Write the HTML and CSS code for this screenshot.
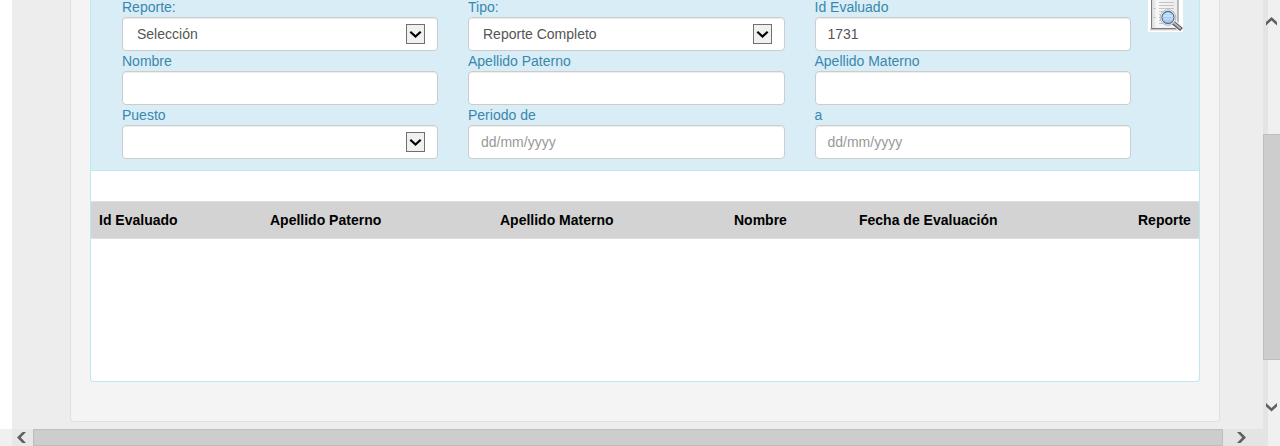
FILE: index.html
```html
<!DOCTYPE html>
<html lang="es">
<head>
<meta charset="utf-8">
<title>Reportes</title>
<link rel="stylesheet" href="styles.css">
</head>
<body>
<div class="window">
  <div class="main-row">
    <main class="page">
      <section class="well">
        <div class="panel">
          <div class="panel-heading">
            <form class="filters">
              <div class="field"><label>Reporte:</label><div class="control select"><span>Selección</span><i class="drop"><svg width="13" height="9" viewBox="0 0 13 9"><path d="M1.3 1.7 6.5 6.6 11.7 1.7"/></svg></i></div></div>
              <div class="field"><label>Tipo:</label><div class="control select"><span>Reporte Completo</span><i class="drop"><svg width="13" height="9" viewBox="0 0 13 9"><path d="M1.3 1.7 6.5 6.6 11.7 1.7"/></svg></i></div></div>
              <div class="field"><label>Id Evaluado</label><div class="control">1731</div></div>
              <div class="field"><label>Nombre</label><div class="control"></div></div>
              <div class="field"><label>Apellido Paterno</label><div class="control"></div></div>
              <div class="field"><label>Apellido Materno</label><div class="control"></div></div>
              <div class="field"><label>Puesto</label><div class="control select"><span></span><i class="drop"><svg width="13" height="9" viewBox="0 0 13 9"><path d="M1.3 1.7 6.5 6.6 11.7 1.7"/></svg></i></div></div>
              <div class="field"><label>Periodo de</label><div class="control hint">dd/mm/yyyy</div></div>
              <div class="field"><label>a</label><div class="control hint">dd/mm/yyyy</div></div>
            </form>
            <svg class="search-icon" width="35" height="32" viewBox="0 0 35 32">
              <defs>
                <linearGradient id="paper"><stop offset="0" stop-color="#d6d6d6"/><stop offset=".2" stop-color="#f7f7f7"/><stop offset="1" stop-color="#ececec"/></linearGradient>
                <linearGradient id="lens" x1="0" y1="0" x2="0" y2="1"><stop offset="0" stop-color="#e6f0fa"/><stop offset=".5" stop-color="#c3daf2"/><stop offset="1" stop-color="#a9cbee"/></linearGradient>
              </defs>
              <path fill="#fff" d="M0 0h35v32H0z"/>
              <path fill="#c4c4c4" d="M2 28.500h29v1.800H2z"/>
              <path fill="url(#paper)" stroke="#7c7c7c" d="M3.500-2h26.500v30.500H3.500z"/>
              <path fill="none" stroke="#bbb" d="M5.500 8.500h2M5.500 17.500h2"/>
              <path fill="none" stroke="#c4c4c4" d="M11 2.500h15M11 5.500h15M11 8.500h15M11 11.500h15M11 14.500h15M11 17.500h15M11 20.500h15M11 23.500h6"/>
              <path stroke="#fff" stroke-width="6" d="m25 22 8 7"/>
              <path stroke="#555" stroke-width="4.200" d="m25.500 22.800 8 6.700"/>
              <path stroke="#b5b5b5" stroke-width="2" d="m25.500 22.500 7.200 6.200"/>
              <circle cx="20" cy="17.500" r="7.800" fill="#f9f9f9" stroke="#aaa" stroke-width=".8"/>
              <circle cx="20" cy="17.500" r="6" fill="url(#lens)" stroke="#4d75b0" stroke-width="1.300"/>
              <path fill="none" stroke="#a2c3e8" stroke-width=".7" d="M15 14.500h10M14.500 17.500h11M15 20.500h10"/>
            </svg>
          </div>
          <div class="panel-body">
            <table class="results">
              <colgroup><col class="c-id"><col class="c-pat"><col class="c-mat"><col class="c-nom"><col class="c-date"><col class="c-rep"></colgroup>
              <thead><tr><th>Id Evaluado</th><th>Apellido Paterno</th><th>Apellido Materno</th><th>Nombre</th><th>Fecha de Evaluación</th><th>Reporte</th></tr></thead>
            </table>
          </div>
        </div>
      </section>
    </main>
    <div class="vscroll">
      <svg class="up" width="11" height="9" viewBox="0 0 11 9"><path d="M0 8.500V5L5.500 0 11 5v3.500L5.500 3.500z"/></svg>
      <div class="vthumb"></div>
      <svg class="down" width="11" height="9" viewBox="0 0 11 9"><path d="M0 0v3.500L5.500 8.500 11 3.500V0L5.500 5z"/></svg>
    </div>
  </div>
  <div class="hscroll">
    <div class="gutter"></div>
    <div class="left"><svg width="9" height="11" viewBox="0 0 9 11"><path d="M9 0H5.500L0 5.500 5.500 11H9L3.800 5.500z"/></svg></div>
    <div class="hthumb"></div>
    <div class="right"><svg width="9" height="11" viewBox="0 0 9 11"><path d="M0 0h3.500L9 5.500 3.500 11H0L5.200 5.500z"/></svg></div>
    <div class="corner"></div>
  </div>
</div>
</body>
</html>
```
FILE: styles.css
```css
* { box-sizing: border-box; }
body {
  margin: 0;
  overflow: hidden;
  background: #fff;
  color: #000;
  font: 14px/20px "Liberation Sans", Arial, sans-serif;
}
svg { display: block; }
.window { height: 446px; display: flex; flex-direction: column; }
.main-row { height: 429px; display: flex; padding-left: 12px; }
.page { flex: 1; padding: 0 43px 7px 58px; background: #ededed; }
.well {
  height: 422px;
  padding: 0 19px 39px;
  border: 1px solid #e0e0e0;
  border-top: 0;
  border-radius: 0 0 4px 4px;
  background: #f4f4f4;
}
.panel {
  height: 382px;
  border: 1px solid #bce8f1;
  border-top: 0;
  border-radius: 0 0 4px 4px;
  background: #fff;
}
.panel-heading {
  height: 171px;
  display: flex;
  overflow: hidden;
  padding-left: 31px;
  border-bottom: 1px solid #bce8f1;
  background: #d9edf7;
}
.filters {
  width: 1009px;
  margin-top: -3px;
  display: grid;
  grid-template-columns: 316px 317px 316px;
  grid-auto-rows: 54px;
  column-gap: 30px;
}
.field label { display: block; height: 20px; color: #3a87ad; }
.field:nth-child(3n) label { margin-left: -.5px; }
.control {
  height: 34px;
  padding: 6px 12px;
  border: 1px solid #ccc;
  border-radius: 4px;
  background: #fff;
  box-shadow: inset 0 1px 1px rgba(0, 0, 0, .075);
  color: #555;
}
.field:nth-child(3n) .control { padding-left: 11.5px; }
.hint { color: #999; }
.select { display: flex; justify-content: space-between; padding-left: 14px; }
.drop {
  width: 19px;
  height: 20px;
  display: grid;
  place-items: center;
  border: 1px solid #707070;
  background: #f0f0f0;
}
.drop path { fill: none; stroke: #000; stroke-width: 2.2; }
.search-icon { margin-left: 17px; }
.panel-body { padding-top: 30px; }
.results { width: 1108px; table-layout: fixed; border-collapse: separate; border-spacing: 0; }
.results th {
  height: 38px;
  padding: 0 8px;
  border: solid #ddd;
  border-width: 1px 0;
  background: #d3d3d3;
  font-weight: bold;
  text-align: left;
  white-space: nowrap;
}
.c-id { width: 171px; }
.c-pat { width: 230px; }
.c-mat { width: 234px; }
.c-nom { width: 125px; }
.c-date { width: 279px; }
.c-rep { width: 69px; }
.vscroll {
  width: 17px;
  display: flex;
  flex-direction: column;
  padding-top: 17px;
  background: linear-gradient(90deg, #e4e4e4 5px, #f0f0f0 5px);
}
.vscroll svg { margin-left: 3px; }
.vscroll path, .hscroll path { fill: #606060; }
.vthumb { height: 226px; margin: 108px 0 43px; border: solid #bebebe; border-width: 1px 0 1px 1px; background: #cdcdcd; }
.hscroll { height: 17px; display: flex; background: #e4e4e4; }
.gutter { width: 12px; background: #f0f0f0; }
.left { width: 21px; padding: 3px 0 0 5px; background: #e8e8e8; }
.hthumb { width: 1190px; border: 1px solid #bebebe; background: #cdcdcd; }
.right { flex: 1; padding: 3px 0 0 14px; }
.corner { width: 12px; background: #f0f0f0; }
```
